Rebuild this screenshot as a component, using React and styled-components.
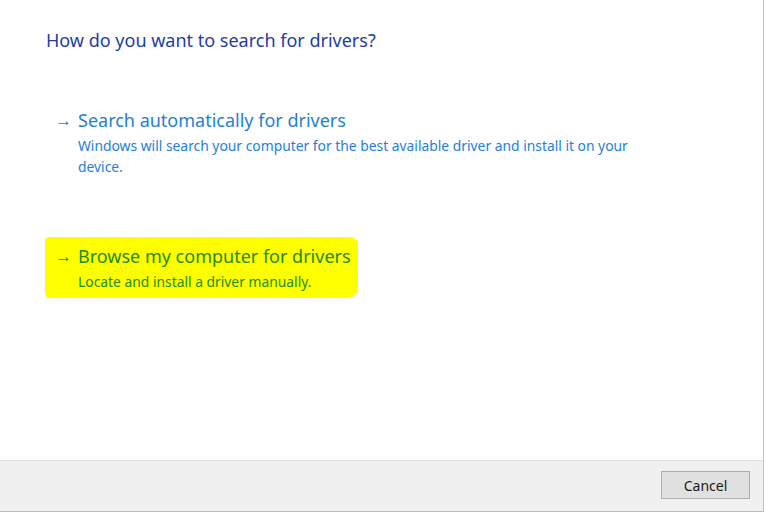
import styled, { createGlobalStyle } from "styled-components";

const Global = createGlobalStyle`
    html, body {
        margin: 0;
        padding: 0;
        background: #ffffff;
    }
    body {
        font-family: "Noto Sans", "Open Sans", sans-serif;
    }
`;

const Window = styled.div`
    width: 763px;
    height: 511px;
    border-right: 1px solid #c3c3c3;
    border-bottom: 1px solid #bdbdbd;
    display: flex;
    flex-direction: column;
    background: #ffffff;
`;

const Content = styled.div`
    flex: 1;
    padding: 27px 0 0 46px;
    display: flex;
    flex-direction: column;
    align-items: flex-start;
`;

const Heading = styled.h1`
    margin: 0;
    font-size: 18px;
    line-height: 27px;
    font-weight: 400;
    color: #1d3ea3;
`;

const Options = styled.div`
    margin: 47px 0 0 -1px;
    display: flex;
    flex-direction: column;
    align-items: flex-start;
    gap: 54px;
`;

const Option = styled.div`
    display: grid;
    grid-template-columns: 23px auto;
    padding: 6px 7px 6px 10px;
    color: ${(p) => (p.$marked ? "#238c0c" : "#1f7fd6")};
    background: ${(p) => (p.$marked ? "#ffff00" : "transparent")};
    border-radius: 5px 9px 11px 4px / 4px 7px 9px 6px;
    cursor: pointer;
`;

const Arrow = styled.span`
    font-size: 17px;
    line-height: 26px;
`;

const Title = styled.div`
    font-size: 18px;
    line-height: 26px;
`;

const Desc = styled.div`
    grid-column: 2;
    margin-top: 2px;
    font-size: 13.85px;
    line-height: 21px;
    max-width: 565px;
`;

const Footer = styled.div`
    height: 51px;
    background: #f0f0f0;
    border-top: 1px solid #dfdfdf;
    display: flex;
    justify-content: flex-end;
    align-items: flex-start;
    padding: 10px 13px 0 0;
    box-sizing: border-box;
`;

const Button = styled.button`
    width: 89px;
    height: 28px;
    background: #e1e1e1;
    border: 1px solid #adadad;
    font-family: "Noto Sans", "Open Sans", sans-serif;
    font-size: 14px;
    color: #1a1a1a;
    padding: 0;
`;

const choices = [
    {
        title: "Search automatically for drivers",
        desc: "Windows will search your computer for the best available driver and install it on your device.",
    },
    {
        title: "Browse my computer for drivers",
        desc: "Locate and install a driver manually.",
        marked: true,
    },
];

export default function App() {
    return (
        <>
            <Global />
            <Window>
                <Content>
                    <Heading>How do you want to search for drivers?</Heading>
                    <Options>
                        {choices.map((c) => (
                            <Option key={c.title} $marked={c.marked}>
                                <Arrow>→</Arrow>
                                <Title>{c.title}</Title>
                                <Desc>{c.desc}</Desc>
                            </Option>
                        ))}
                    </Options>
                </Content>
                <Footer>
                    <Button>Cancel</Button>
                </Footer>
            </Window>
        </>
    );
}
